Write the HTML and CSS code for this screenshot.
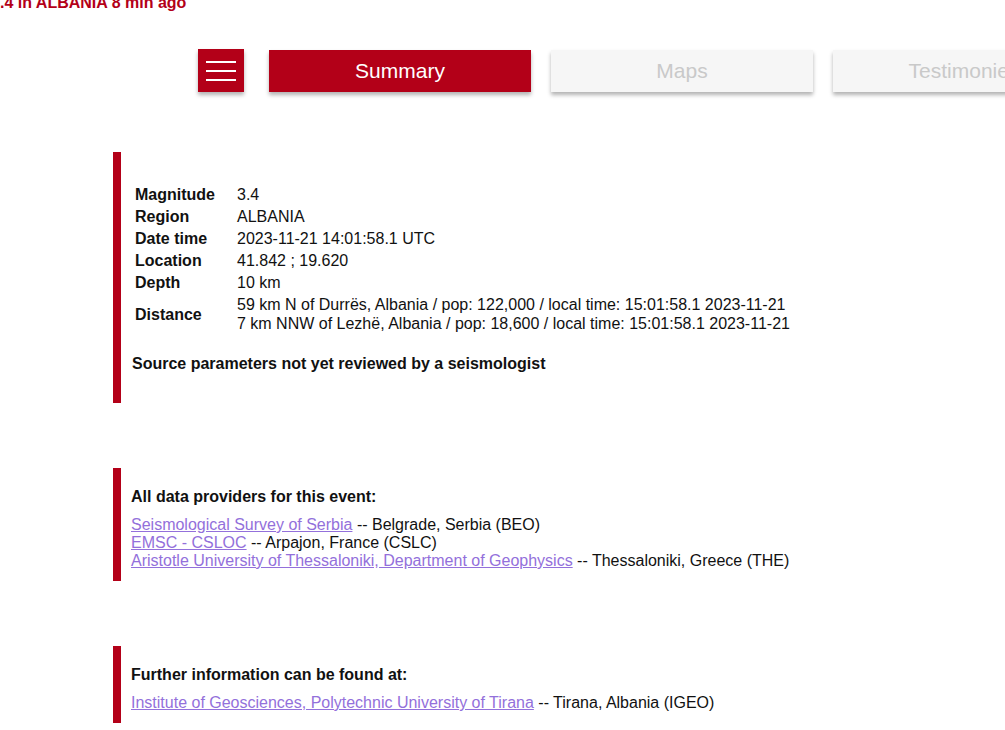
FILE: index.html
```html
<!DOCTYPE html>
<html lang="en">

<head>
    <meta charset="UTF-8">
    <title>M 3.4 - ALBANIA</title>
    <link rel="stylesheet" href="styles.css">
</head>

<body>
    <h1 class="event-title">.4 in ALBANIA 8 min ago</h1>

    <div class="nav">
        <div class="menu-btn">
            <span></span>
            <span></span>
            <span></span>
        </div>
        <div class="tab active">Summary</div>
        <div class="tab">Maps</div>
        <div class="tab">Testimonies</div>
    </div>

    <div class="content">
        <div class="card card-summary">
            <table class="params">
                <tr>
                    <td class="label">Magnitude</td>
                    <td>3.4</td>
                </tr>
                <tr>
                    <td class="label">Region</td>
                    <td>ALBANIA</td>
                </tr>
                <tr>
                    <td class="label">Date time</td>
                    <td>2023-11-21 14:01:58.1 UTC</td>
                </tr>
                <tr>
                    <td class="label">Location</td>
                    <td>41.842 ; 19.620</td>
                </tr>
                <tr>
                    <td class="label">Depth</td>
                    <td>10 km</td>
                </tr>
                <tr>
                    <td class="label">Distance</td>
                    <td class="distance">59 km N of Durrës, Albania / pop: 122,000 / local time: 15:01:58.1 2023-11-21<br>7 km NNW of Lezhë, Albania / pop: 18,600 / local time: 15:01:58.1 2023-11-21</td>
                </tr>
            </table>
            <p class="note">Source parameters not yet reviewed by a seismologist</p>
        </div>

        <div class="card">
            <h3>All data providers for this event:</h3>
            <div class="links">
                <a href="#">Seismological Survey of Serbia</a> -- Belgrade, Serbia (BEO)<br>
                <a href="#">EMSC - CSLOC</a> -- Arpajon, France (CSLC)<br>
                <a href="#">Aristotle University of Thessaloniki, Department of Geophysics</a> -- Thessaloniki, Greece (THE)
            </div>
        </div>

        <div class="card">
            <h3>Further information can be found at:</h3>
            <div class="links">
                <a href="#">Institute of Geosciences, Polytechnic University of Tirana</a> -- Tirana, Albania (IGEO)
            </div>
        </div>
    </div>
</body>

</html>
```

FILE: styles.css
```css
* {
    margin: 0;
    padding: 0;
    box-sizing: border-box;
}

html {
    overflow: hidden;
}

body {
    font-family: 'Liberation Sans', Arial, sans-serif;
    font-size: 16px;
    color: #111;
    background: #fff;
}

.event-title {
    margin-top: -6px;
    font-size: 16px;
    line-height: 18px;
    font-weight: bold;
    color: #b30018;
    white-space: nowrap;
}

.nav {
    display: flex;
    align-items: flex-start;
    gap: 20px;
    margin-top: 37px;
    padding-left: 198px;
    width: max-content;
}

.menu-btn {
    width: 46px;
    height: 43px;
    background: #b30018;
    display: flex;
    flex-direction: column;
    justify-content: center;
    align-items: center;
    gap: 7px;
    margin-right: 5px;
    box-shadow: 0 3px 4px rgba(0, 0, 0, 0.3);
}

.menu-btn span {
    display: block;
    width: 30px;
    height: 2px;
    background: #fff;
}

.tab {
    width: 262px;
    height: 42px;
    margin-top: 1px;
    background: #f6f6f6;
    color: #c9c9c9;
    font-size: 21px;
    line-height: 42px;
    text-align: center;
    box-shadow: 0 3px 4px rgba(0, 0, 0, 0.3);
}

.tab.active {
    background: #b30018;
    color: #fff;
}

.content {
    margin-left: 113px;
    margin-top: 60px;
    display: flex;
    flex-direction: column;
    gap: 65px;
}

.card {
    border-left: 8px solid #b30018;
    padding: 20px 10px 11px 10px;
    line-height: 18px;
}

.card-summary {
    padding: 32px 11px 30px 11px;
}

.params {
    border-collapse: separate;
    border-spacing: 0;
    margin-left: 3px;
}

.params td {
    padding: 2px 0;
    vertical-align: middle;
}

.params td.label {
    width: 102px;
    font-weight: bold;
}

.params td.distance {
    padding-top: 1px;
    line-height: 19px;
}

.note {
    margin-top: 20px;
    font-weight: bold;
}

.card h3 {
    font-size: 16px;
    font-weight: bold;
}

.links {
    margin-top: 10px;
}

.links a {
    color: #9370db;
    text-decoration: underline;
}
```
